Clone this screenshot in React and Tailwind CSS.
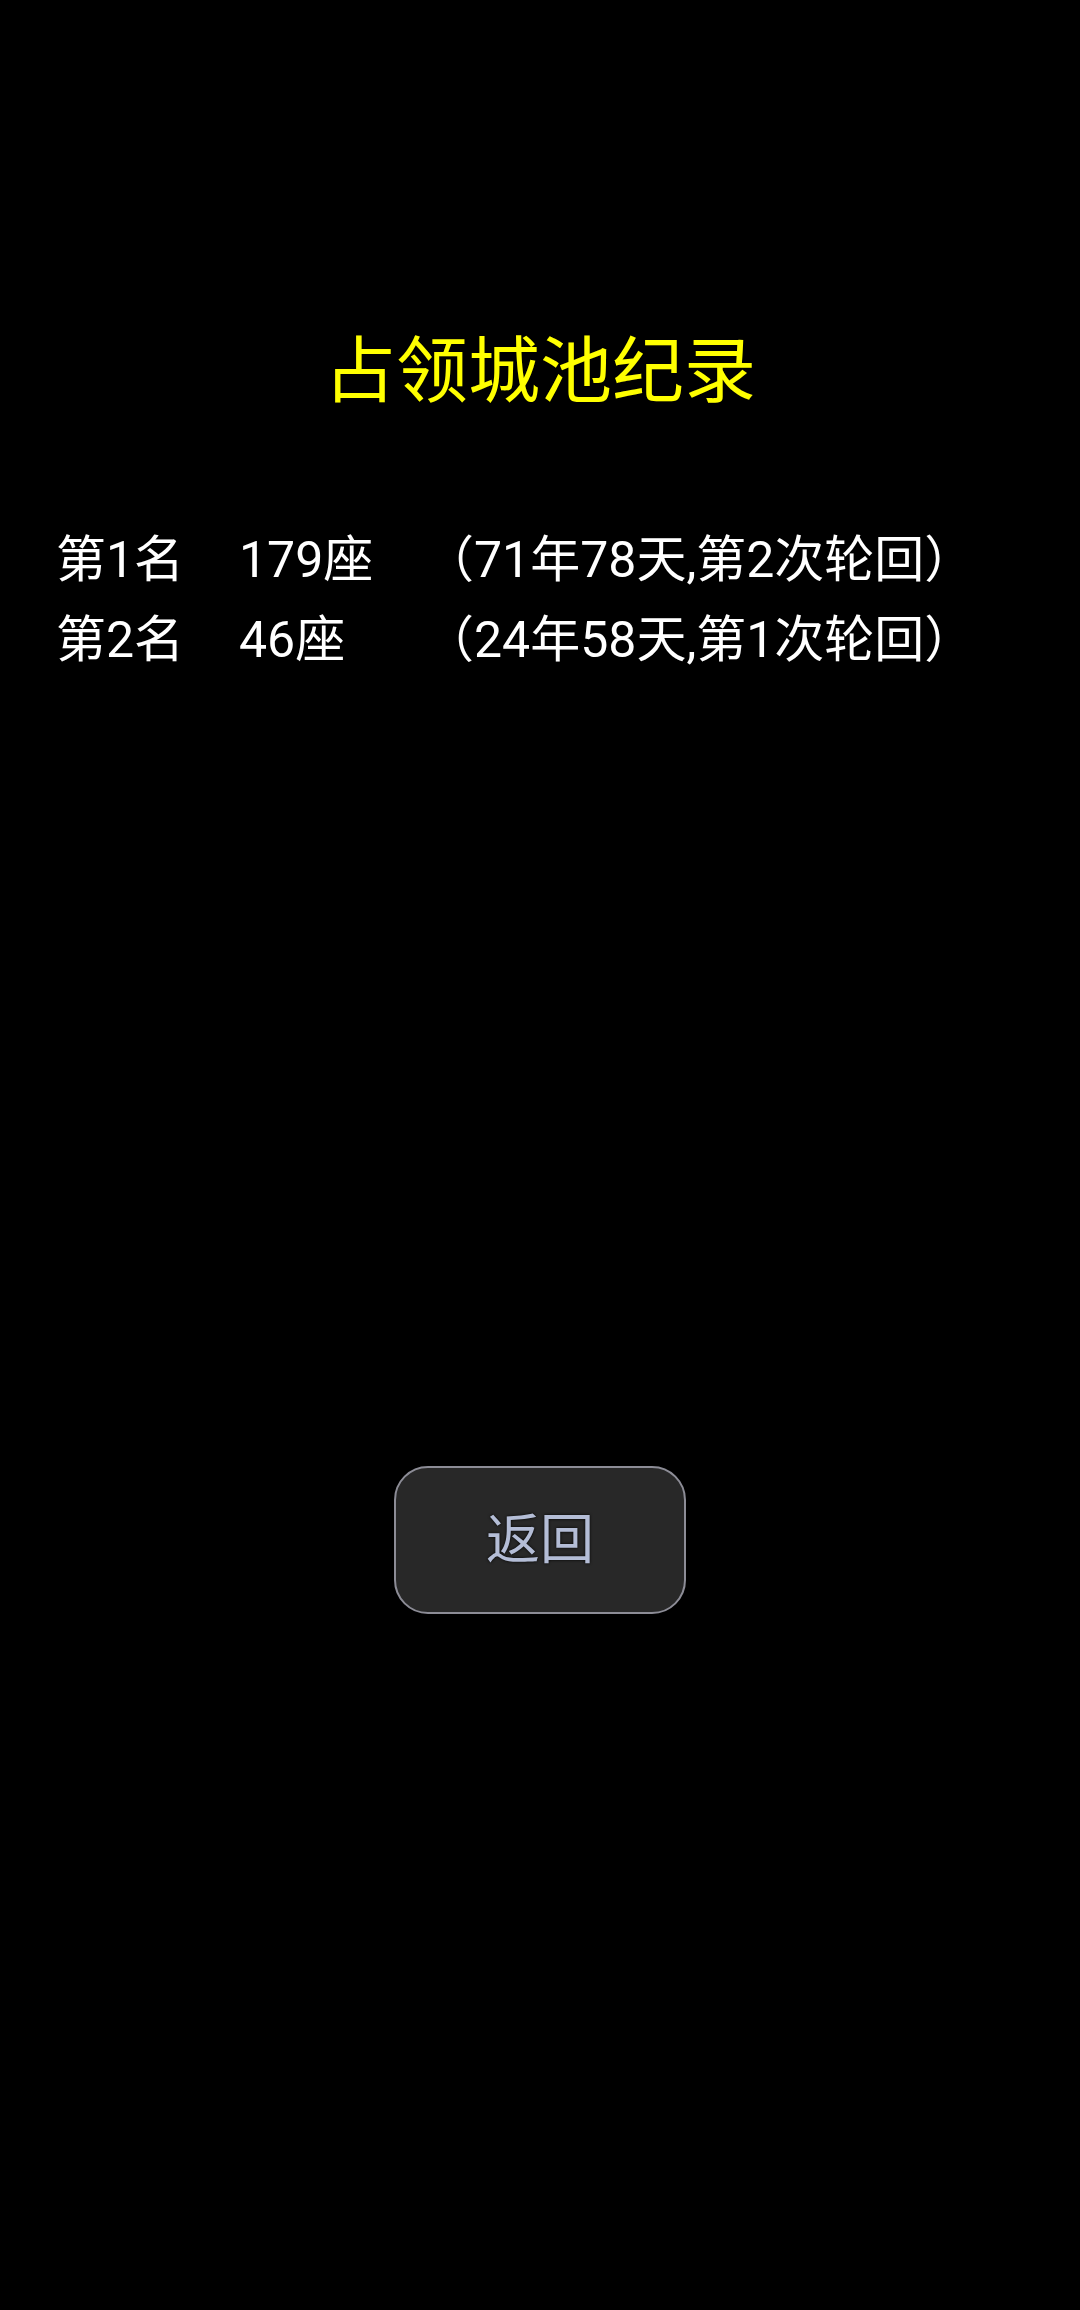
// 占领城池纪录 screen: black page, yellow title, two record rows, a back button.

const FONT = { fontFamily: 'Roboto, "Noto Sans CJK SC", sans-serif' };

const RECORDS = [
  { rank: '第1名', count: '179座', detail: '（71年78天,第2次轮回）' },
  { rank: '第2名', count: '46座', detail: '（24年58天,第1次轮回）' },
];

export default function App() {
  return (
    <div className="flex min-h-[2310px] w-[1080px] flex-col bg-black" style={FONT}>
      <h1 className="mt-[329px] text-center text-[72px] font-normal leading-[86px] text-[#ffff00]">
        占领城池纪录
      </h1>

      <div className="mt-[105px] flex flex-col pl-[56px]">
        {RECORDS.map(r => (
          <div key={r.rank} className="flex h-[80px] items-center text-[50px] leading-[80px] text-white">
            <span className="w-[183px] shrink-0">{r.rank}</span>
            <span className="w-[185px] shrink-0">{r.count}</span>
            <span className="whitespace-nowrap">{r.detail}</span>
          </div>
        ))}
      </div>

      <button className="mx-auto mt-[786px] flex h-[148px] w-[292px] items-center justify-center rounded-[34px] border-2 border-[#8c8c96] bg-[#282828] text-[54px] text-[#b4bdd6] [text-shadow:0_0_3px_#000]">
        返回
      </button>
    </div>
  );
}
